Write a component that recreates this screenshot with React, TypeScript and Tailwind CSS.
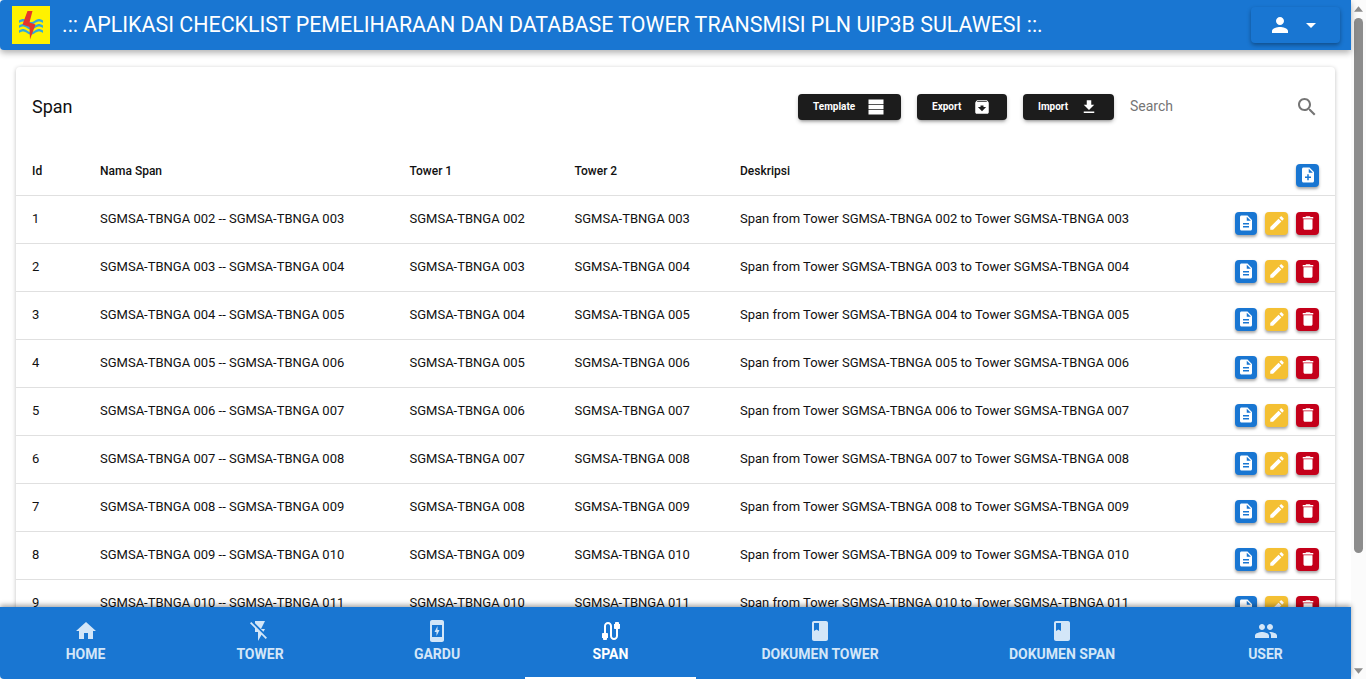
const icons = {
  home: "M10 20v-6h4v6h5v-8h3L12 3 2 12h3v8z",
  flashOff: "M3.27 3L2 4.27l5 5V13h3v9l3.58-6.14L17.73 20 19 18.73 3.27 3zM17 10h-4l4-8H7v2.18l8.46 8.46L17 10z",
  charging: "M14.5 11l-3 6v-4h-2l3-6v4h2zM7 1h10c1.1 0 2 .9 2 2v18c0 1.1-.9 2-2 2H7c-1.1 0-2-.9-2-2V3c0-1.1.9-2 2-2zm0 5v12h10V6H7z",
  cable: "M20 5V4c0-.55-.45-1-1-1h-2c-.55 0-1 .45-1 1v1h-1v4c0 .55.45 1 1 1h1v7c0 1.1-.9 2-2 2s-2-.9-2-2V7c0-2.21-1.79-4-4-4S5 4.79 5 7v7H4c-.55 0-1 .45-1 1v4h1v1c0 .55.45 1 1 1h2c.55 0 1-.45 1-1v-1h1v-4c0-.55-.45-1-1-1H7V7c0-1.1.9-2 2-2s2 .9 2 2v10c0 2.21 1.79 4 4 4s4-1.79 4-4v-7h1c.55 0 1-.45 1-1V5h-1z",
  book: "M18 2H6c-1.1 0-2 .9-2 2v16c0 1.1.9 2 2 2h12c1.1 0 2-.9 2-2V4c0-1.1-.9-2-2-2zM6 4h5v8l-2.5-1.5L6 12V4z",
  people: "M16 11c1.66 0 2.99-1.34 2.99-3S17.66 5 16 5c-1.66 0-3 1.34-3 3s1.34 3 3 3zm-8 0c1.66 0 2.99-1.34 2.99-3S9.66 5 8 5C6.34 5 5 6.34 5 8s1.34 3 3 3zm0 2c-2.33 0-7 1.17-7 3.5V19h14v-2.5c0-2.33-4.67-3.5-7-3.5zm8 0c-.29 0-.62.02-.97.05 1.16.84 1.97 1.97 1.97 3.45V19h6v-2.5c0-2.33-4.67-3.5-7-3.5z",
  person: "M12 12c2.21 0 4-1.79 4-4s-1.79-4-4-4-4 1.79-4 4 1.79 4 4 4zm0 2c-2.67 0-8 1.34-8 4v2h16v-2c0-2.66-5.33-4-8-4z",
  dropDown: "M7 10l5 5 5-5z",
  search: "M15.5 14h-.79l-.28-.27C15.41 12.59 16 11.11 16 9.5 16 5.91 13.09 3 9.5 3S3 5.91 3 9.5 5.91 16 9.5 16c1.61 0 3.09-.59 4.23-1.57l.27.28v.79l5 4.99L20.49 19l-4.99-5zm-6 0C7.01 14 5 11.99 5 9.5S7.01 5 9.5 5 14 7.01 14 9.5 11.99 14 9.5 14z",
  description: "M14 2H6c-1.1 0-1.99.9-1.99 2L4 20c0 1.1.89 2 1.99 2H18c1.1 0 2-.9 2-2V8l-6-6zm2 16H8v-2h8v2zm0-4H8v-2h8v2zm-3-5V3.5L18.5 9H13z",
  noteAdd: "M14 2H6c-1.1 0-1.99.9-1.99 2L4 20c0 1.1.89 2 1.99 2H18c1.1 0 2-.9 2-2V8l-6-6zm2 14h-3v3h-2v-3H8v-2h3v-3h2v3h3v2zm-3-7V3.5L18.5 9H13z",
  edit: "M3 17.25V21h3.75L17.81 9.94l-3.75-3.75L3 17.25zM20.71 7.04c.39-.39.39-1.02 0-1.41l-2.34-2.34c-.39-.39-1.02-.39-1.41 0l-1.83 1.83 3.75 3.75 1.83-1.83z",
  trash: "M6 19c0 1.1.9 2 2 2h8c1.1 0 2-.9 2-2V7H6v12zM19 4h-3.5l-1-1h-5l-1 1H5v2h14V4z",
  stream: "M2 2h20v6H2zM2 9h20v6H2zM2 16h20v6H2z",
  archive: "M20.54 5.23l-1.39-1.68C18.88 3.21 18.47 3 18 3H6c-.47 0-.88.21-1.16.55L3.46 5.23C3.17 5.57 3 6.02 3 6.5V19c0 1.1.9 2 2 2h14c1.1 0 2-.9 2-2V6.5c0-.48-.17-.93-.46-1.27zM12 17.5L6.5 12H10v-2h4v2h3.5L12 17.5zM5.12 5l.81-1h12l.94 1H5.12z",
  getApp: "M19 9h-4V3H9v6H5l7 7 7-7zM5 18v2h14v-2H5z",
}

function Icon({ d, className }: { d: string; className?: string }) {
  return (
    <svg viewBox="0 0 24 24" fill="currentColor" className={className}>
      <path d={d} />
    </svg>
  )
}

function Logo() {
  return (
    <svg viewBox="0 0 38 38" className="w-[38px] h-[38px] shrink-0">
      <rect width="38" height="38" fill="#fff200" />
      <path d="M7 14.5c3-2 5-2 8 0s5 2 8 0 5-2 8 0v2.5c-3-2-5-2-8 0s-5 2-8 0-5-2-8 0z" fill="#35a9d6" />
      <path d="M7 19.5c3-2 5-2 8 0s5 2 8 0 5-2 8 0v2.5c-3-2-5-2-8 0s-5 2-8 0-5-2-8 0z" fill="#35a9d6" />
      <path d="M7 24.5c3-2 5-2 8 0s5 2 8 0 5-2 8 0v2.5c-3-2-5-2-8 0s-5 2-8 0-5-2-8 0z" fill="#35a9d6" />
      <path d="M15.5 5h5l-3 11.5 6 2-5.5 15-.5-12.5-7-2.5z" fill="#e5352b" />
    </svg>
  )
}

function ToolButton({ label, icon, className }: { label: string; icon: string; className: string }) {
  return (
    <button className={`h-[26px] bg-[#1c1c1c] text-white rounded-[4px] flex items-center text-[10px] font-bold shadow-[0_3px_3px_-2px_rgba(0,0,0,0.3),0_2px_4px_0_rgba(0,0,0,0.2)] ${className}`}>
      {label}
      <Icon d={icon} className="w-[18px] h-[18px]" />
    </button>
  )
}

function ActionButton({ icon, color }: { icon: string; color: string }) {
  return (
    <button className={`h-[23px] rounded-[4px] flex items-center justify-center text-white shadow-[0_2px_3px_0_rgba(0,0,0,0.35)] ${color}`}>
      <Icon d={icon} className="w-[18px] h-[18px]" />
    </button>
  )
}

const rows = Array.from({ length: 9 }, (_, i) => {
  const a = `SGMSA-TBNGA ${String(i + 2).padStart(3, "0")}`
  const b = `SGMSA-TBNGA ${String(i + 3).padStart(3, "0")}`
  return { id: i + 1, a, b }
})

const tabs = [
  { label: "HOME", icon: icons.home },
  { label: "TOWER", icon: icons.flashOff },
  { label: "GARDU", icon: icons.charging },
  { label: "SPAN", icon: icons.cable, active: true },
  { label: "DOKUMEN TOWER", icon: icons.book },
  { label: "DOKUMEN SPAN", icon: icons.book },
  { label: "USER", icon: icons.people },
]

export default function App() {
  return (
    <div className="h-[679px] flex overflow-hidden bg-white font-['Roboto',sans-serif] text-[13px] text-[#111111]">
      <div className="w-[1351px] flex flex-col">
        {/* Top bar */}
        <header className="relative z-10 h-[50px] shrink-0 bg-[#1976d2] text-white rounded-l-[4px] flex items-center pl-3 pr-[11px] shadow-[0_3px_6px_rgba(0,0,0,0.3)]">
          <Logo />
          <h1 className="ml-3 text-[21.4px] whitespace-nowrap">.:: APLIKASI CHECKLIST PEMELIHARAAN DAN DATABASE TOWER TRANSMISI PLN UIP3B SULAWESI ::.</h1>
          <button className="ml-auto w-[89px] h-[36px] rounded-[4px] bg-[#1976d2] flex items-center justify-center gap-[7px] shadow-[0_2px_4px_rgba(0,0,0,0.35)]">
            <Icon d={icons.person} className="w-6 h-6" />
            <Icon d={icons.dropDown} className="w-6 h-6" />
          </button>
        </header>

        {/* Content */}
        <main className="flex-1 overflow-hidden px-4 pt-[17px]">
          <div className="bg-white rounded-[4px] shadow-[0_1px_4px_rgba(0,0,0,0.25)]">
            <div className="h-[79px] flex items-center pl-4 pr-4">
              <h2 className="text-[18px] mr-auto">Span</h2>
              <ToolButton label="Template" icon={icons.stream} className="w-[103px] pl-[15px] gap-[12px]" />
              <ToolButton label="Export" icon={icons.archive} className="w-[90px] ml-4 pl-[15px] gap-[12px]" />
              <ToolButton label="Import" icon={icons.getApp} className="w-[91px] ml-4 pl-[15px] gap-[12px]" />
              <span className="w-[165px] ml-4 text-[14px] text-[#757575]">Search</span>
              <Icon d={icons.search} className="w-6 h-6 text-[#757575]" />
            </div>
            <table className="w-full table-fixed text-left">
              <colgroup>
                <col className="w-[84px]" />
                <col className="w-[309.5px]" />
                <col className="w-[165px]" />
                <col className="w-[165.5px]" />
                <col />
                <col className="w-[116px]" />
              </colgroup>
              <thead>
                <tr className="h-[49px] border-b border-[#e0e0e0] text-[12px]">
                  <th className="pl-4 pt-[2px] font-medium">Id</th>
                  <th className="pt-[2px] font-medium">Nama Span</th>
                  <th className="pt-[2px] font-medium">Tower 1</th>
                  <th className="pt-[2px] font-medium">Tower 2</th>
                  <th className="pt-[2px] font-medium">Deskripsi</th>
                  <th className="pt-[10px]">
                    <div className="flex justify-end pr-4">
                      <ActionButton icon={icons.noteAdd} color="w-[23px] bg-[#1976d2]" />
                    </div>
                  </th>
                </tr>
              </thead>
              <tbody>
                {rows.map((r) => (
                  <tr key={r.id} className="h-[48px] border-b border-[#e0e0e0]">
                    <td className="pl-4">{r.id}</td>
                    <td className="whitespace-nowrap">{r.a} -- {r.b}</td>
                    <td className="whitespace-nowrap">{r.a}</td>
                    <td className="whitespace-nowrap">{r.b}</td>
                    <td className="whitespace-nowrap">Span from Tower {r.a} to Tower {r.b}</td>
                    <td className="pt-[8px]">
                      <div className="flex justify-end gap-2 pr-4">
                        <ActionButton icon={icons.description} color="w-[22px] bg-[#1976d2]" />
                        <ActionButton icon={icons.edit} color="w-[23px] bg-[#f4c033]" />
                        <ActionButton icon={icons.trash} color="w-[23px] bg-[#c4001a]" />
                      </div>
                    </td>
                  </tr>
                ))}
              </tbody>
            </table>
          </div>
        </main>

        {/* Bottom tabs */}
        <nav className="relative z-10 h-[72px] shrink-0 bg-[#1976d2] rounded-bl-[4px] grid grid-cols-[171px_178px_176px_171px_248px_236px_171px] shadow-[0_-2px_5px_rgba(0,0,0,0.35)]">
          {tabs.map((t) => (
            <div
              key={t.label}
              className={`flex flex-col items-center pt-[12px] text-[14px] font-bold leading-[20px] gap-[1px] border-b-2 ${t.active ? "text-white border-white" : "text-[#d3e6f8] border-transparent"}`}
            >
              <Icon d={t.icon} className="w-6 h-6" />
              {t.label}
            </div>
          ))}
        </nav>
      </div>

      {/* Scrollbar */}
      <div className="w-[15px] bg-[#fbfbfb] flex flex-col items-center text-[#8c8c8c]">
        <svg viewBox="0 0 10 6" className="w-[9px] h-[6px] mt-[6px]" fill="currentColor"><path d="M5 0l5 6H0z" /></svg>
        <div className="w-[9px] h-[535px] mt-[6px] rounded-full bg-[#8c8c8c]" />
        <svg viewBox="0 0 10 6" className="w-[9px] h-[6px] mt-auto mb-[5px]" fill="currentColor"><path d="M5 6L0 0h10z" /></svg>
      </div>
    </div>
  )
}
